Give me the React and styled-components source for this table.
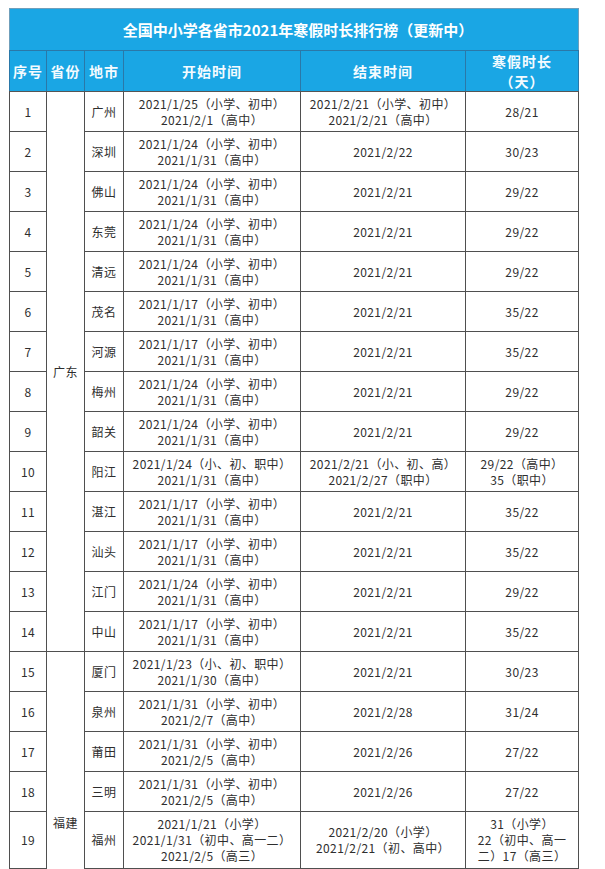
import React from 'react';
import styled, { createGlobalStyle } from 'styled-components';

const GlobalStyle = createGlobalStyle`
  html, body {
    margin: 0;
    padding: 0;
    background: #fff;
    overflow: hidden;
  }
  body {
    font-family: "Noto Sans CJK SC", "Liberation Sans", sans-serif;
  }
`;

const Page = styled.div`
  padding: 8px 0 0 9px;
  height: 861px;
  overflow: hidden;
`;

const Table = styled.table`
  border-collapse: collapse;
  table-layout: fixed;
  width: 570px;
  color: #2e2e2e;
  font-size: 12px;
  letter-spacing: 0.4px;
`;

const TitleCell = styled.th`
  height: 41px;
  padding: 0 0 0 8px;
  background: #1aa6e4;
  color: #fff;
  font-size: 15px;
  font-weight: 700;
  letter-spacing: 0;
  border: 1px solid #6f9fbb;
  border-bottom-color: #2a78a8;
`;

const HeadCell = styled.th`
  height: 40px;
  padding: 0;
  background: #1aa6e4;
  color: #f4fbff;
  font-size: 14px;
  font-weight: 700;
  letter-spacing: 1px;
  line-height: 20px;
  border: 1px solid #2a78a8;
  border-bottom-color: #555;
`;

const Row = styled.tr`
  height: ${p => p.$h || 40}px;
`;

const Cell = styled.td`
  padding: 0;
  text-align: center;
  vertical-align: middle;
  line-height: 16px;
  border: 1px solid #4f4f4f;
  white-space: nowrap;
`;

const rows = [
  [1, '广州', ['2021/1/25（小学、初中）', '2021/2/1（高中）'], ['2021/2/21（小学、初中）', '2021/2/21（高中）'], ['28/21']],
  [2, '深圳', ['2021/1/24（小学、初中）', '2021/1/31（高中）'], ['2021/2/22'], ['30/23']],
  [3, '佛山', ['2021/1/24（小学、初中）', '2021/1/31（高中）'], ['2021/2/21'], ['29/22']],
  [4, '东莞', ['2021/1/24（小学、初中）', '2021/1/31（高中）'], ['2021/2/21'], ['29/22']],
  [5, '清远', ['2021/1/24（小学、初中）', '2021/1/31（高中）'], ['2021/2/21'], ['29/22']],
  [6, '茂名', ['2021/1/17（小学、初中）', '2021/1/31（高中）'], ['2021/2/21'], ['35/22']],
  [7, '河源', ['2021/1/17（小学、初中）', '2021/1/31（高中）'], ['2021/2/21'], ['35/22']],
  [8, '梅州', ['2021/1/24（小学、初中）', '2021/1/31（高中）'], ['2021/2/21'], ['29/22']],
  [9, '韶关', ['2021/1/24（小学、初中）', '2021/1/31（高中）'], ['2021/2/21'], ['29/22']],
  [10, '阳江', ['2021/1/24（小、初、职中）', '2021/1/31（高中）'], ['2021/2/21（小、初、高）', '2021/2/27（职中）'], ['29/22（高中）', '35（职中）']],
  [11, '湛江', ['2021/1/17（小学、初中）', '2021/1/31（高中）'], ['2021/2/21'], ['35/22']],
  [12, '汕头', ['2021/1/17（小学、初中）', '2021/1/31（高中）'], ['2021/2/21'], ['35/22']],
  [13, '江门', ['2021/1/24（小学、初中）', '2021/1/31（高中）'], ['2021/2/21'], ['29/22']],
  [14, '中山', ['2021/1/17（小学、初中）', '2021/1/31（高中）'], ['2021/2/21'], ['35/22']],
  [15, '厦门', ['2021/1/23（小、初、职中）', '2021/1/30（高中）'], ['2021/2/21'], ['30/23']],
  [16, '泉州', ['2021/1/31（小学、初中）', '2021/2/7（高中）'], ['2021/2/28'], ['31/24']],
  [17, '莆田', ['2021/1/31（小学、初中）', '2021/2/5（高中）'], ['2021/2/26'], ['27/22']],
  [18, '三明', ['2021/1/31（小学、初中）', '2021/2/5（高中）'], ['2021/2/26'], ['27/22']],
  [19, '福州', ['2021/1/21（小学）', '2021/1/31（初中、高一二）', '2021/2/5（高三）'], ['2021/2/20（小学）', '2021/2/21（初、高中）'], ['31（小学）', '22（初中、高一', '二）17（高三）'], 57],
];

// the Fujian group runs on past the bottom of the shot
const provinces = { 1: ['广东', 14], 15: ['福建', 6] };

const Lines = ({ items }) => items.map((t, i) => (
  <React.Fragment key={i}>{i > 0 && <br />}{t}</React.Fragment>
));

export default function App() {
  return (
    <Page>
      <GlobalStyle />
      <Table>
        <colgroup>
          <col style={{ width: 37 }} />
          <col style={{ width: 38 }} />
          <col style={{ width: 39 }} />
          <col style={{ width: 177 }} />
          <col style={{ width: 165 }} />
          <col style={{ width: 113 }} />
        </colgroup>
        <thead>
          <tr>
            <TitleCell colSpan={6}>全国中小学各省市2021年寒假时长排行榜（更新中）</TitleCell>
          </tr>
          <tr>
            <HeadCell>序号</HeadCell>
            <HeadCell>省份</HeadCell>
            <HeadCell>地市</HeadCell>
            <HeadCell>开始时间</HeadCell>
            <HeadCell>结束时间</HeadCell>
            <HeadCell>寒假时长<br />（天）</HeadCell>
          </tr>
        </thead>
        <tbody>
          {rows.map(([no, city, start, end, days, h]) => (
            <Row key={no} $h={h}>
              <Cell>{no}</Cell>
              {provinces[no] && <Cell rowSpan={provinces[no][1]}>{provinces[no][0]}</Cell>}
              <Cell>{city}</Cell>
              <Cell><Lines items={start} /></Cell>
              <Cell><Lines items={end} /></Cell>
              <Cell><Lines items={days} /></Cell>
            </Row>
          ))}
          <Row $h={126}>
            <Cell />
            <Cell />
            <Cell />
            <Cell />
            <Cell />
          </Row>
        </tbody>
      </Table>
    </Page>
  );
}
